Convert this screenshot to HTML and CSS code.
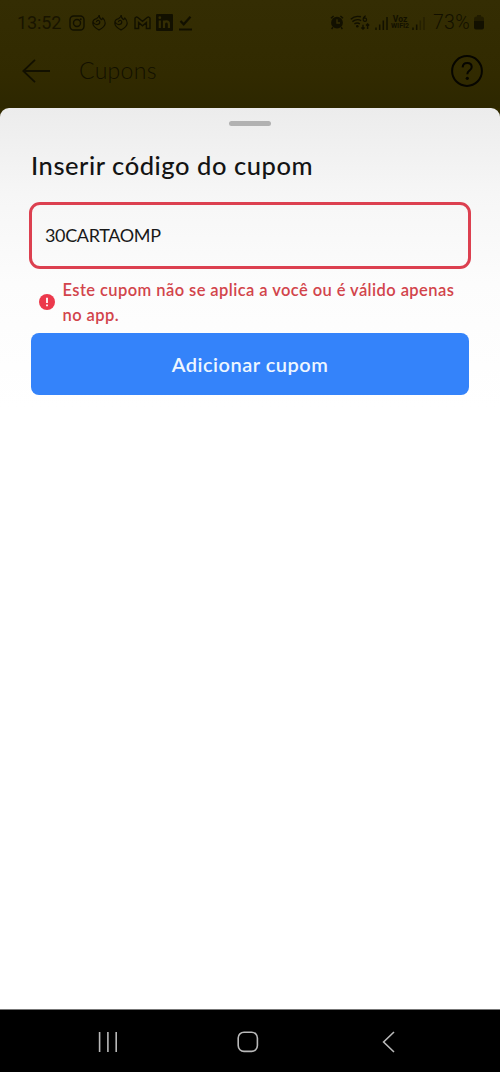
FILE: index.html
```html
<!DOCTYPE html>
<html lang="pt-BR">
<head>
<meta charset="utf-8">
<title>Cupons</title>
<link rel="stylesheet" href="styles.css">
</head>
<body>
<div class="screen">
  <div class="backdrop">
    <div class="status">
      <div class="status-left">
        <span class="clock">13:52</span>
        <svg class="ic" width="16" height="16" viewBox="0 0 16 16"><rect x="1" y="1" width="14" height="14" rx="3.8"/><circle cx="8" cy="8" r="3.5"/><circle class="solid" cx="11.8" cy="4.2" r=".9"/></svg>
        <svg class="ic flame" width="14" height="17" viewBox="0 0 14 17"><path d="M7.2 1C7 3.2 7.8 4.2 9.3 5.6C10.2 5.4 10.6 4.8 10.9 4.1C12.3 5.5 13.2 7.2 13.2 9.2C13 12.4 9.6 14.6 7 16C4.2 14.6 1 12.6 .8 9.3C.7 6.7 2.6 5 4.6 4.6C6 3.9 7 2.6 7.2 1ZM1 8C3 12 7.8 11 7.8 8.1C7.8 5.8 4.4 6 4.5 8.1"/></svg>
        <svg class="ic flame" width="14" height="17" viewBox="0 0 14 17"><path d="M7.2 1C7 3.2 7.8 4.2 9.3 5.6C10.2 5.4 10.6 4.8 10.9 4.1C12.3 5.5 13.2 7.2 13.2 9.2C13 12.4 9.6 14.6 7 16C4.2 14.6 1 12.6 .8 9.3C.7 6.7 2.6 5 4.6 4.6C6 3.9 7 2.6 7.2 1ZM1 8C3 12 7.8 11 7.8 8.1C7.8 5.8 4.4 6 4.5 8.1"/></svg>
        <svg class="ic gmail" width="17" height="14" viewBox="0 0 17 14"><path d="M1 2.2Q2 .3 3.8 1.5L8.5 5.3L13.2 1.5Q15 .3 16 2.2V12.5H12.4V6.6L8.5 9.8L4.6 6.6V12.5H1Z"/></svg>
        <svg class="ic linked" width="17" height="17" viewBox="0 0 17 17"><rect class="solid" width="17" height="17" rx="1"/><path class="cut" d="M3.8 6.5V14M8 6.5V14M8 10Q8 7.4 10.4 7.4Q12.9 7.4 12.9 10V14"/><circle class="cut-dot" cx="3.8" cy="3.7" r="1.4"/></svg>
        <svg class="ic done" width="13" height="16" viewBox="0 0 13 16"><path d="M1.5 6L4.7 9.3L11.5 1.8M0 14.5H13"/></svg>
      </div>
      <div class="status-right">
        <svg class="ic" width="14" height="15" viewBox="0 0 14 15"><circle class="solid" cx="7" cy="7.7" r="5.9"/><path d="M1 3.2L3.6 1M13 3.2L10.4 1M2.9 12.3L1.6 14M11.1 12.3L12.4 14"/><path class="hands" d="M7 4.2V8H10"/></svg>
        <svg class="ic wifi" width="20" height="16" viewBox="0 0 20 16"><path d="M.8 4.2Q5 .2 11 1.8M2.4 6.6Q6.8 3.3 11.2 5.6M4.4 8.9Q7.2 7.2 9.9 8.9M13 9.8V14M11.4 12.4L13 14.1L14.6 12.4M17.6 14V9M16 10.6L17.6 9L19.2 10.6"/><circle class="solid" cx="7.3" cy="11.2" r="1.3"/><path class="six" d="M15.8 .8Q13.1 2 13.1 4.6A1.75 1.75 0 1 0 14.9 2.9Q13.6 2.9 13.1 4.3"/></svg>
        <svg class="ic signal" width="13" height="14" viewBox="0 0 13 14"><path d="M1 11.5V14M4.7 8.5V14M8.3 4.5V14M12 1V14"/></svg>
        <span class="voz"><span>Voz</span><span>WIFI2</span></span>
        <svg class="ic signal" width="13" height="14" viewBox="0 0 13 14"><path d="M1 11.5V14M4.7 8.5V14"/><path class="faint" d="M8.3 4.5V14M12 1V14"/></svg>
        <span class="percent">73%</span>
        <svg class="ic" width="10" height="15" viewBox="0 0 10 15"><path class="battery-top" d="M3 0H7V1.5H8Q10 1.5 10 4V7H0V4Q0 1.5 2 1.5H3Z"/><path class="solid" d="M0 6H10V12.5Q10 14.5 8 14.5H2Q0 14.5 0 12.5Z"/></svg>
      </div>
    </div>
    <header class="appbar">
      <svg class="back" width="28" height="24" viewBox="0 0 28 24"><path d="M1 12H28M13 .8L1.3 12L13 23.2"/></svg>
      <span class="appbar-title">Cupons</span>
      <svg class="help" width="32" height="32" viewBox="0 0 32 32"><circle cx="16" cy="16" r="14.9"/><path d="M11.6 12.3Q12 8 16.2 8Q20.7 8 20.7 12Q20.7 14.2 18.4 15.6Q16.3 16.9 16.3 19.3"/><circle class="dot" cx="16.3" cy="23.3" r="1.6"/></svg>
    </header>
  </div>
  <main class="sheet">
    <div class="handle"></div>
    <h1 class="title"><span>Inserir código do cupom</span></h1>
    <div class="field"><span>30CARTAOMP</span></div>
    <div class="error">
      <svg class="error-icon" width="16" height="16" viewBox="0 0 16 16"><circle cx="8" cy="8" r="8"/><path d="M8 3.8V9M8 10.6V12.2"/></svg>
      <p class="error-text"><span>Este cupom não se aplica a você ou é válido apenas</span><br><span>no app.</span></p>
    </div>
    <button class="submit"><span>Adicionar cupom</span></button>
  </main>
  <nav class="navbar">
    <svg width="20" height="20" viewBox="0 0 20 20"><path d="M1.6 0V20M9.9 0V20M18.2 0V20"/></svg>
    <svg class="home" width="22" height="22" viewBox="0 0 22 22"><rect x="1.2" y="1.2" width="19.2" height="19.2" rx="5.8"/></svg>
    <svg width="13" height="22" viewBox="0 0 13 22"><path d="M12 1L1.6 11L12 21"/></svg>
  </nav>
</div>
</body>
</html>
```
FILE: styles.css
```css
* { box-sizing: border-box; }
body { margin: 0; font-family: Lato, "Open Sans", sans-serif; }
.screen { width: 500px; height: 1072px; display: flex; flex-direction: column; background: #312a00; overflow: hidden; }
.backdrop { height: 108px; flex: none; color: #121000; background: linear-gradient(#342d03, #312a00 70%, #2d2700); }
.status { height: 45px; padding: 0 16px 0 17px; display: flex; justify-content: space-between; align-items: center; }
.status-left { display: flex; align-items: center; gap: 7.5px; }
.status-right { display: flex; align-items: center; gap: 5px; }
.clock { width: 44px; font: 400 18px Roboto, sans-serif; letter-spacing: -.1px; color: #181400; }
.ic { display: block; flex: none; fill: none; stroke: #121000; stroke-width: 1.4; }
.ic .solid { fill: #121000; stroke: none; }
.flame { stroke-width: 1.2; }
.gmail { margin-left: -1px; }
.linked .cut { stroke: #342d03; stroke-width: 2.2; }
.linked .cut-dot { fill: #342d03; stroke: none; }
.linked { margin-left: -3px; }
.done { stroke-width: 2.2; margin-left: -1px; }
.hands { stroke: #342d03; }
.wifi { margin-left: 1px; }
.six { stroke-width: 1.2; }
.signal { stroke-width: 1.5; }
.faint { opacity: .4; }
.battery-top { fill: #211c00; stroke: none; }
.voz { display: flex; flex-direction: column; align-items: center; width: 18px; margin: 0 -2px; font: 700 8.5px/7px Roboto, sans-serif; }
.voz span:last-child { font-size: 7px; }
.percent { width: 37px; margin-left: 3px; font: 300 19.5px Roboto, sans-serif; letter-spacing: .3px; margin-right: -1px; }
.appbar { height: 52px; padding: 0 17px 0 22px; display: flex; align-items: center; }
.back { fill: none; stroke: #121000; stroke-width: 1.8; }
.appbar-title { flex: 1; margin: -2px 0 0 29px; font-size: 23px; font-weight: 300; letter-spacing: .3px; }
.help { fill: none; stroke: #070600; stroke-width: 2; }
.help .dot { fill: #070600; stroke: none; }
.sheet { flex: 1; padding: 13px 29px 0; border-radius: 9px 9px 0 0; background: linear-gradient(#ececec 0, #f6f6f6 85px, #fcfcfc 175px, #fff 300px); }
.handle { width: 42px; height: 5px; margin: 0 auto; border-radius: 3px; background: #b2b2b2; }
.title { margin: 20px 2px 0; height: 38px; font: 500 25.5px/38px "Lato Medium", Lato, sans-serif; letter-spacing: .55px; color: #141414; white-space: nowrap; }
.field { height: 67px; margin-top: 18px; padding: 0 13px 1px; display: flex; align-items: center; border: 3px solid #dc4050; border-radius: 11px; color: #191919; font-size: 18px; letter-spacing: -.35px; }
.error { display: flex; align-items: center; height: 49px; margin-top: 8px; padding-left: 10px; gap: 7.5px; }
.error-icon { flex: none; fill: #ec394c; }
.error-icon path { stroke: #fff; stroke-width: 1.8; }
.error-text { margin: 3px 0 0; color: #d2444b; font: 600 16.5px/25px "Lato Semibold", Lato, sans-serif; letter-spacing: .42px; white-space: nowrap; }
.submit { display: flex; align-items: center; justify-content: center; width: 438px; height: 62px; margin: 7px 2px 0; padding: 0; border: 0; border-radius: 8px; background: #3483fa; color: #eef6ff; font: 600 20px "Lato Semibold", Lato, sans-serif; letter-spacing: .5px; }
.navbar { height: 63px; flex: none; padding: 2px 105px 0 98px; display: flex; align-items: center; justify-content: space-between; background: #000; border-top: 1px solid #777; }
.navbar svg { fill: none; stroke: #b9b9b9; stroke-width: 1.6; }
.home { margin-right: 4px; }
```
